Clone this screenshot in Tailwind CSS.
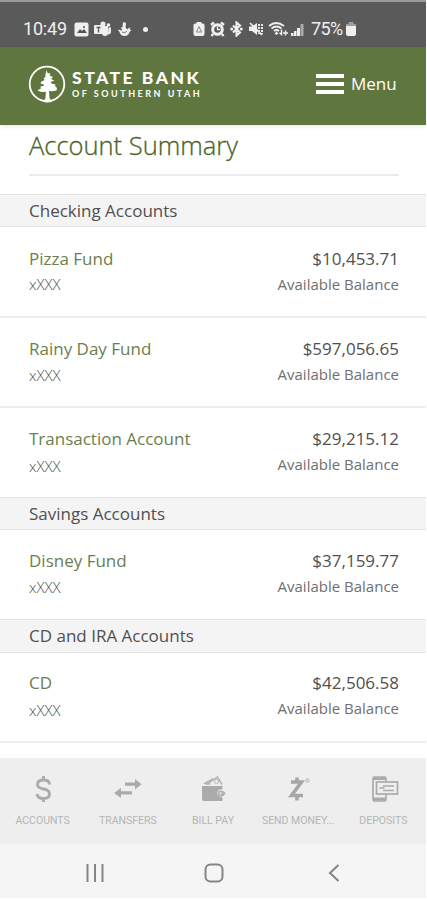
<!DOCTYPE html>
<html lang="en">
<head>
    <meta charset="UTF-8">
    <meta name="viewport" content="width=device-width, initial-scale=1.0">
    <title>Account Summary</title>
    <script src="https://cdn.jsdelivr.net/npm/@tailwindcss/browser@4"></script>
</head>
<body class="bg-white">
<div class="w-[426px] h-[900px] flex flex-col overflow-hidden font-['Open_Sans',sans-serif] text-[#505050]">
    <!-- Status bar -->
    <div class="h-[47px] shrink-0 bg-[#5a5a5a] border-t-2 border-[#9a9a9a] flex items-center pl-[23px] pt-[9px] text-[#efefef] font-['Roboto',sans-serif]">
        <span class="w-[51px] text-[18px] leading-5 tracking-[-0.2px]">10:49</span>
        <svg class="w-[15px] h-[15px]" viewBox="0 0 15 15"><rect x="0.500" y="0.500" width="14" height="14" rx="2" fill="currentColor"/><path d="M3 11l3-4 2 2 2-2 3 4z" fill="#555"/><circle cx="10" cy="5" r="1" fill="#555"/></svg>
        <svg class="ml-[5px] w-[18px] h-4" viewBox="0 0 18 16" fill="currentColor"><circle cx="9" cy="3" r="2.500"/><circle cx="14.500" cy="4" r="1.800"/><path d="M8 5h6v7a3 3 0 0 1-6 0zM14.500 6.500H17v4a3 3 0 0 1-3 3z"/><rect y="4" width="9" height="9" rx="1"/><path d="M2.500 6.500h4M4.500 6.500v5" stroke="#5a5a5a" stroke-width="1.300"/></svg>
        <svg class="ml-[6px] w-[14px] h-4" viewBox="0 0 14 16" fill="currentColor"><path d="M5 1.500q2-1 3 1l-.5 4 2 2q1-2 3-2l-1 2 2 .5-2 2q-1 4-5 4-4 0-5-4L0 9q2-1 3.500 1L4 8 2.500 7l2-1z"/><path d="M4 11q3 2 5-1" stroke="#777" fill="none"/></svg>
        <span class="ml-[11px] size-[5px] rounded-full bg-[#efefef]"></span>
        <svg class="ml-[45px] w-[12px] h-4" viewBox="0 0 12 16"><path d="M3.500 1h5v1.500h1.500q1.500 0 1.500 1.500v9q0 2-2 2h-7q-2 0-2-2V4q0-1.500 1.500-1.500h1.500z" fill="currentColor"/><path d="M6 5.500l2.500 5.500h-5z" stroke="#888" stroke-width="1" fill="none"/></svg>
        <svg class="ml-[5px] w-[15px] h-4" viewBox="0 0 15 16"><circle cx="7.500" cy="8.500" r="4.800" fill="none" stroke="currentColor" stroke-width="3"/><path d="M1 4l3-2.500M14 4l-3-2.500M3 13l-1.500 2M12 13l1.500 2" stroke="currentColor" stroke-width="2.400"/><path d="M7.500 5.500v3h2.500" fill="none" stroke="currentColor" stroke-width="1.300"/></svg>
        <svg class="ml-[5px] w-[13px] h-4" viewBox="0 0 13 16"><path d="M3 4.500l7 7-3.500 3v-13l3.500 3-7 7" fill="none" stroke="currentColor" stroke-width="2.100"/><circle cx="1.700" cy="8" r="1.500" fill="currentColor"/><circle cx="11.300" cy="8" r="1.500" fill="currentColor"/></svg>
        <svg class="ml-[6px] w-[15px] h-4" viewBox="0 0 15 16"><path d="M0 5.500h3L8 2v12l-5-4H0z" fill="currentColor"/><path d="M1 2l12 12" stroke="currentColor" stroke-width="1.600"/><path d="M10 3v10M13 3v10" stroke="currentColor" stroke-width="1.900" stroke-dasharray="2 1"/></svg>
        <svg class="ml-[4px] w-[21px] h-4" viewBox="0 0 21 16" fill="none" stroke="currentColor" stroke-width="1.700"><path d="M1 5q7-6 15 0M3.500 7.500q5-4 10 0M6 10q2.500-2 5 0"/><path d="M8.500 10.500l2 2-2 1.500-2-1.500z" fill="currentColor" stroke="none"/><path d="M13.500 8.500v5l-2-1.700M17.500 14.500V9.500M15 12h5" stroke-width="1.500"/></svg>
        <svg class="ml-[2px] w-[13px] h-4" viewBox="0 0 13 16" fill="currentColor"><path d="M0 12h2.500v3H0zM3 10h2.500v5H3zM6 7h3v8H6z"/><path d="M9.500 3H12.500v12H9.500z" opacity=".55"/></svg>
        <span class="ml-[7px] w-[34px] text-[18px] leading-5 tracking-[-0.6px]">75%</span>
        <svg class="w-[12px] h-4" viewBox="0 0 12 16" fill="currentColor"><path d="M3.500 1h5v2H11v3H1V3h2.500z" opacity=".45"/><path d="M1 5h10v8q0 2-2 2H3q-2 0-2-2z"/></svg>
    </div>

    <!-- Bank header -->
    <header class="h-[78px] shrink-0 bg-[#5f763f] flex items-center pl-[28px] pr-[29px] pb-1 text-white shadow-[0_1px_5px_rgba(0,0,0,0.12)]">
        <svg class="w-[38px] h-[38px] shrink-0" viewBox="0 0 38 38"><circle cx="19" cy="19" r="17.300" fill="none" stroke="white" stroke-width="1.800"/><path d="M18.500 5l1 3 3 .5-1 2 3.500 1.500-2 2 3.500 1.500-4 1.500 1 1.500 4 1-.5 1.500 2 2-.5 2.500-4 .8-3.500-.3.500 7 2.500 3.800q-4 1.500-9 0l2.500-3.500.4-6.500-4.500.3-4-1.600 3.500-2-.5-1.700 4-1.500-1-1-3-.8 1-2 3.500-1.500-1.500-1.500 2-1.500 0-2z" fill="white"/></svg>
        <div class="ml-[6px] w-[134px] font-['Lato','Open_Sans',sans-serif] font-black whitespace-nowrap">
            <div class="text-[17.5px] leading-[18px] tracking-[2.5px]">STATE BANK</div>
            <div class="mt-px text-[9px] leading-[12px] font-bold tracking-[2.5px]">OF SOUTHERN UTAH</div>
        </div>
        <div class="ml-auto flex items-center">
            <div class="w-7 flex flex-col gap-1">
                <span class="h-[4px] bg-white"></span>
                <span class="h-[4px] bg-white"></span>
                <span class="h-[4px] bg-white"></span>
            </div>
            <span class="ml-[7px] w-[46px] text-[17px] leading-6 whitespace-nowrap">Menu</span>
        </div>
    </header>

    <main class="h-[633px] shrink-0 text-[17px]">
        <div class="ml-[29px] mr-[27px] h-[51px] border-b-2 border-[#ebebeb]">
            <h1 class="pt-[2px] text-[25.5px] leading-[36px] font-light [-webkit-text-stroke:0.3px] text-[#4b6428] whitespace-nowrap">Account Summary</h1>
        </div>

        <h2 class="mt-[18px] h-[33px] bg-[#f4f4f4] border-y border-[#e2e2e2] px-[29px] leading-[31px]">Checking Accounts</h2>
        <div class="h-[91px] border-b-2 border-[#ededed] pl-[29px] pr-[27px] pt-[20px] flex justify-between">
            <div>
                <div class="leading-6 text-[#6c7e50]">Pizza Fund</div>
                <div class="text-[15px] leading-[26px] font-light">xXXX</div>
            </div>
            <div class="text-right">
                <div class="leading-6">$10,453.71</div>
                <div class="text-[15px] leading-[26px] text-[#707070]">Available Balance</div>
            </div>
        </div>
        <div class="h-[90px] border-b-2 border-[#ededed] pl-[29px] pr-[27px] pt-[19px] flex justify-between">
            <div>
                <div class="leading-6 text-[#6c7e50]">Rainy Day Fund</div>
                <div class="text-[15px] leading-[28px] font-light">xXXX</div>
            </div>
            <div class="text-right">
                <div class="leading-6">$597,056.65</div>
                <div class="text-[15px] leading-[26px] text-[#707070]">Available Balance</div>
            </div>
        </div>
        <div class="h-[89px] pl-[29px] pr-[27px] pt-[19px] flex justify-between">
            <div>
                <div class="leading-6 text-[#6c7e50]">Transaction Account</div>
                <div class="text-[15px] leading-[30px] font-light">xXXX</div>
            </div>
            <div class="text-right">
                <div class="leading-6">$29,215.12</div>
                <div class="text-[15px] leading-[26px] text-[#707070]">Available Balance</div>
            </div>
        </div>

        <h2 class="h-[33px] bg-[#f4f4f4] border-y border-[#e2e2e2] px-[29px] leading-[31px]">Savings Accounts</h2>
        <div class="h-[89px] pl-[29px] pr-[27px] pt-[19px] flex justify-between">
            <div>
                <div class="leading-6 text-[#6c7e50]">Disney Fund</div>
                <div class="text-[15px] leading-[28px] font-light">xXXX</div>
            </div>
            <div class="text-right">
                <div class="leading-6">$37,159.77</div>
                <div class="text-[15px] leading-[26px] text-[#707070]">Available Balance</div>
            </div>
        </div>

        <h2 class="h-[34px] bg-[#f4f4f4] border-y border-[#e2e2e2] px-[29px] leading-[31px]">CD and IRA Accounts</h2>
        <div class="h-[90px] border-b-2 border-[#ededed] pl-[29px] pr-[27px] pt-[18px] flex justify-between">
            <div>
                <div class="leading-6 text-[#6c7e50]">CD</div>
                <div class="text-[15px] leading-[30px] font-light">xXXX</div>
            </div>
            <div class="text-right">
                <div class="leading-6">$42,506.58</div>
                <div class="text-[15px] leading-[27px] text-[#707070]">Available Balance</div>
            </div>
        </div>
    </main>

    <!-- App tabs -->
    <nav class="h-[86px] shrink-0 bg-[#eeeeee] grid grid-cols-5 pt-[15px] text-[#b5b5b5] font-['Roboto',sans-serif] text-[10.5px] whitespace-nowrap">
        <div class="flex flex-col items-center">
            <svg class="w-8 h-8" viewBox="0 0 32 32" fill="none" stroke="#aaabaa" stroke-width="2.800"><path d="M22.500 11.500Q22.500 7 16.500 7t-6 4.500q0 3.500 6 4.500t6 5q0 4.500-6 4.500T10 21M16.500 3V7M16.500 25.500v3.500"/></svg>
            <span class="mt-[10px] leading-3">ACCOUNTS</span>
        </div>
        <div class="flex flex-col items-center">
            <svg class="w-8 h-8" viewBox="0 0 32 32" fill="#aaabaa"><path d="M13 9.500h10V6l6.500 5.200-6.500 5.300v-3.700H13zM20 18.300H9V15l-7 5 7 5v-3.500h11z"/></svg>
            <span class="mt-[10px] leading-3">TRANSFERS</span>
        </div>
        <div class="flex flex-col items-center">
            <svg class="w-8 h-8" viewBox="0 0 32 32"><path d="M5 13h20.500v3.500h-3a4 4 0 0 0-1 6.500l4 1.500V28H7q-2 0-2-2z" fill="#aaabaa"/><path d="M6 10.500l10-5.500 1.500 2L11 12z" fill="#b2b2b2"/><path d="M13 11.500l-1-2L20.500 4l4.500 7.500" fill="#eee" stroke="#b5b5b5" stroke-width="1.500"/><circle cx="19.500" cy="8.500" r="2" fill="none" stroke="#b5b5b5"/><path d="M23.500 17.500q3.500 0 5 2.500-1 3.500-4.500 3.500a3 3 0 0 1-.5-6z" fill="#b0b1b0"/><circle cx="23.500" cy="20.300" r="1.100" fill="#eee"/></svg>
            <span class="mt-[10px] leading-3">BILL PAY</span>
        </div>
        <div class="flex flex-col items-center">
            <svg class="w-8 h-8" viewBox="0 0 32 32"><path d="M9 9h10.500L9.500 22.500H21M15 4.500V9M15 23v4.500" fill="none" stroke="#a7a7a7" stroke-width="3.600"/><circle cx="25.500" cy="7.500" r="1.700" fill="#ddd" stroke="#c5c5c5" stroke-width="1.200"/></svg>
            <span class="mt-[10px] leading-3">SEND MONEY...</span>
        </div>
        <div class="flex flex-col items-center">
            <svg class="ml-1 w-8 h-8" viewBox="0 0 32 32" fill="none" stroke="#aaabaa" stroke-width="1.700"><path d="M17 8V5.500Q17 4 15.500 4H5.500Q4 4 4 5.500v20.500q0 2 2 2h9q2 0 2-2v-4.500"/><path d="M4 5.500h13M4 26h13" stroke-width="3"/><rect x="7.500" y="9" width="21" height="12"/><path d="M10.500 15h5M14 13h11M14 17.500h11" stroke-width="1.500"/></svg>
            <span class="mt-[10px] leading-3">DEPOSITS</span>
        </div>
    </nav>

    <!-- System navigation -->
    <div class="h-[54px] shrink-0 bg-[#f5f5f5] flex items-center pl-[85px] pt-1 text-[#858585]">
        <svg class="w-5 h-5" viewBox="0 0 20 20"><path d="M2.500 1v18M10 1v18M17.500 1v18" stroke="currentColor" stroke-width="2"/></svg>
        <svg class="ml-[99px] w-5 h-5" viewBox="0 0 20 20"><rect x="1.500" y="1.500" width="17" height="17" rx="5" fill="none" stroke="currentColor" stroke-width="2"/></svg>
        <svg class="ml-[104px] w-[12px] h-5" viewBox="0 0 12 20"><path d="M10.500 2L2 10l8.500 8" fill="none" stroke="currentColor" stroke-width="2"/></svg>
    </div>
</div>
</body>
</html>
